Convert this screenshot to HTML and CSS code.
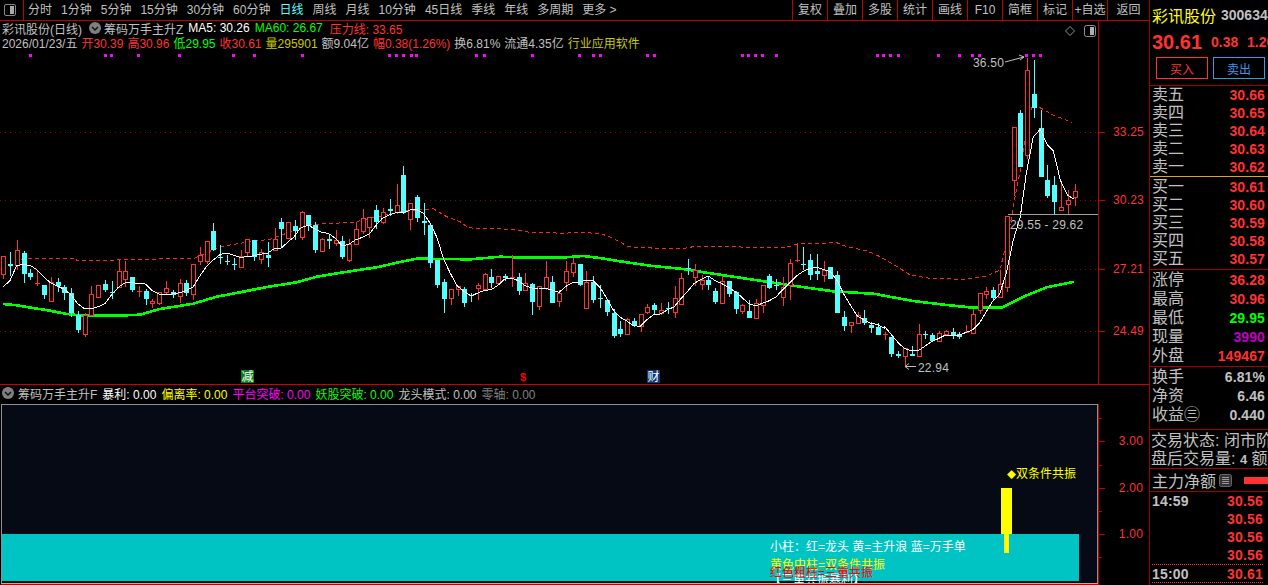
FILE: index.html
```html
<!DOCTYPE html>
<html lang="zh">
<head>
<meta charset="utf-8">
<title>彩讯股份</title>
<link rel="stylesheet" href="styles.css">
</head>
<body>
<div class="app">
  <div class="main">
    <nav class="toolbar">
      <div class="toggle"><span class="toggle-ic"><i></i></span></div>
      <div class="periods">
        <span>分时</span><span>1分钟</span><span>5分钟</span><span>15分钟</span><span>30分钟</span><span>60分钟</span><span class="on">日线</span><span>周线</span><span>月线</span><span>10分钟</span><span>45日线</span><span>季线</span><span>年线</span><span>多周期</span><span>更多 &gt;</span>
      </div>
      <div class="tools">
        <span>复权</span><span>叠加</span><span>多股</span><span>统计</span><span>画线</span><span>F10</span><span>简框</span><span>标记</span><span>+自选</span><span class="last">返回</span>
      </div>
    </nav>
    <section class="chart">
      <svg class="canvas" id="kline" viewBox="0 21 1149 363" width="1149" height="363"></svg>
      <div class="info one">
        <span class="grey">彩讯股份(日线)</span>
        <span class="round"><svg width="12" height="12" viewBox="0 0 12 12"><path d="M3 5l3 3 3-3" fill="none" stroke="#111" stroke-width="1.5"/></svg></span>
        <span class="grey">筹码万手主升Z</span>
        <span class="white">MA5: 30.26</span>
        <span class="green">MA60: 26.67</span>
        <span class="red press">压力线: 33.65</span>
      </div>
      <div class="info two">
        <span class="grey">2026/01/23/五</span>
        <span class="red">开30.39</span>
        <span class="red">高30.96</span>
        <span class="green">低29.95</span>
        <span class="red">收30.61</span>
        <span class="olive">量295901</span>
        <span class="grey">额9.04亿</span>
        <span class="red">幅0.38(1.26%)</span>
        <span class="grey">换6.81%</span>
        <span class="grey">流通4.35亿</span>
        <span class="olive">行业应用软件</span>
      </div>
    </section>
    <section class="sub">
      <div class="sub-head">
        <span class="round"><svg width="12" height="12" viewBox="0 0 12 12"><path d="M3 5l3 3 3-3" fill="none" stroke="#111" stroke-width="1.5"/></svg></span>
        <span class="grey">筹码万手主升F</span>
        <span class="white">暴利: 0.00</span>
        <span class="yellow">偏离率: 0.00</span>
        <span class="magenta">平台突破: 0.00</span>
        <span class="green">妖股突破: 0.00</span>
        <span class="grey">龙头模式: 0.00</span>
        <span class="dim">零轴: 0.00</span>
      </div>
      <div class="sub-body">
        <div class="sub-plot">
          <div class="teal"></div>
          <div class="bar-wide"></div>
          <div class="bar-mid"></div>
          <div class="tag"><span class="dia">◆</span>双条件共振</div>
          <div class="legend l1">小柱：红=龙头 黄=主升浪 蓝=万手单</div>
          <div class="legend l4">【三重共振暴利】</div>
          <div class="legend l2">黄色中柱=双条件共振</div>
          <div class="legend l3">红色粗柱=三重共振</div>
        </div>
        <div class="sub-axis">
          <svg width="50" height="180" viewBox="1099 404 50 180">
            <g stroke="#c00000" shape-rendering="crispEdges">
              <path d="M1099 441.5h6M1099 488.5h6M1099 534.5h6M1099 465.5h3M1099 511.5h3M1099 557.5h3M1099 418.5h3"/>
            </g>
            <g class="axis-t">
              <text x="1143" y="445" text-anchor="end">3.00</text>
              <text x="1143" y="492" text-anchor="end">2.00</text>
              <text x="1143" y="538" text-anchor="end">1.00</text>
            </g>
          </svg>
        </div>
      </div>
    </section>
  </div>
  <aside class="side">
    <div class="quote">
      <div class="q-name"><span class="q-title">彩讯股份</span><span class="q-code">300634</span></div>
      <div class="q-price"><b>30.61</b><span>0.38</span><span>1.26%</span></div>
      <div class="q-btns"><span class="buy">买入</span><span class="sell">卖出</span></div>
    </div>
    <div class="block ask">
      <div class="row"><span>卖五</span><b class="r">30.66</b></div>
      <div class="row"><span>卖四</span><b class="r">30.65</b></div>
      <div class="row"><span>卖三</span><b class="r">30.64</b></div>
      <div class="row"><span>卖二</span><b class="r">30.63</b></div>
      <div class="row"><span>卖一</span><b class="r">30.62</b></div>
    </div>
    <div class="block bid">
      <div class="row"><span>买一</span><b class="r">30.61</b></div>
      <div class="row"><span>买二</span><b class="r">30.60</b></div>
      <div class="row"><span>买三</span><b class="r">30.59</b></div>
      <div class="row"><span>买四</span><b class="r">30.58</b></div>
      <div class="row"><span>买五</span><b class="r">30.57</b></div>
    </div>
    <div class="block stat">
      <div class="row"><span>涨停</span><b class="r">36.28</b></div>
      <div class="row"><span>最高</span><b class="r">30.96</b></div>
      <div class="row"><span>最低</span><b class="g">29.95</b></div>
      <div class="row"><span>现量</span><b class="m">3990</b></div>
      <div class="row"><span>外盘</span><b class="r">149467</b></div>
    </div>
    <div class="block fin">
      <div class="row"><span>换手</span><b class="s">6.81%</b></div>
      <div class="row"><span>净资</span><b class="s">6.46</b></div>
      <div class="row"><span>收益㊂</span><b class="s">0.440</b></div>
    </div>
    <div class="block state">
      <div class="line">交易状态: 闭市阶段</div>
      <div class="line">盘后交易量: <b>4</b> 额</div>
    </div>
    <div class="block net">
      <span class="net-t">主力净额</span>
      <svg class="net-ic" width="13" height="13" viewBox="0 0 13 13"><rect x=".5" y=".5" width="12" height="12" rx="2" fill="#333" stroke="#666"/><path d="M3 3.5h7M3 5.5h7M3 7.5h7M3 9.5h7" stroke="#999"/></svg>
      <span class="net-bar"></span>
    </div>
    <div class="ticks">
      <div class="tick"><b class="s">14:59</b><b class="r">30.56</b></div>
      <div class="tick"><b></b><b class="r">30.56</b></div>
      <div class="tick"><b></b><b class="r">30.56</b></div>
      <div class="tick"><b></b><b class="r">30.56</b></div>
      <div class="tick last"><b class="s">15:00</b><b class="r">30.61</b></div>
    </div>
  </aside>
</div>
<script src="chart.js"></script>
</body>
</html>
```

FILE: styles.css
```css
* { box-sizing: border-box; }
html, body { margin: 0; padding: 0; background: #000; }
body {
  width: 1268px; height: 585px; overflow: hidden;
  font-family: "Liberation Sans", "Noto Sans CJK SC", sans-serif;
  font-size: 12px; color: #c0c0c0;
}
.app { display: flex; width: 1268px; height: 585px; }
.main { width: 1149px; display: flex; flex-direction: column; flex: none; }
.side { width: 119px; flex: none; border-left: 1px solid #a00000; overflow: hidden; display: flex; flex-direction: column; }

.toolbar { height: 21px; flex: none; display: flex; align-items: stretch; border-bottom: 1px solid #c00000; line-height: 21px; }
.toggle { width: 24px; flex: none; border-right: 1px solid #c00000; display: flex; align-items: center; justify-content: center; padding-right: 4px; }
.toggle-ic { width: 12px; height: 12px; border: 1px solid #888; border-radius: 2px; display: flex; justify-content: flex-end; padding: 1px; }
.toggle-ic i { width: 4px; background: #aaa; }
.periods { display: flex; gap: 9px; padding-left: 4px; flex: 1; white-space: nowrap; }
.periods .on { color: #54ffff; }
.tools { display: flex; flex: none; }
.tools span { width: 35px; text-align: center; border-left: 1px solid #c00000; white-space: nowrap; }
.tools .last { width: 42px; }

.chart { height: 364px; flex: none; position: relative; border-bottom: 1px solid #d00000; }
.canvas { position: absolute; left: 0; top: 0; display: block; }
.info { position: relative; display: flex; align-items: center; white-space: nowrap; padding-left: 2px; height: 14px; }
.info.one { gap: 5px; }
.info.one .round { margin-left: 2px; margin-right: -2px; }
.info.one .press { margin-left: 2px; }
.info.two { gap: 4px; }
.grey { color: #c0c0c0; }
.white { color: #fff; }
.green { color: #00ff00; }
.red { color: #ff3232; }
.olive { color: #c8c800; }
.yellow { color: #ffff00; }
.magenta { color: #ff00ff; }
.dim { color: #808080; }
.round { width: 12px; height: 12px; border-radius: 50%; background: #808080; display: inline-flex; flex: none; }
.round svg { display: block; }

.axis-t text, .kl-axis { font-size: 12px; fill: #ff3232; font-family: "Liberation Sans", sans-serif; letter-spacing: .2px; }
.kl-note { font-size: 12px; fill: #c0c0c0; font-family: "Liberation Sans", sans-serif; letter-spacing: .2px; }
.kl-mark { font-size: 12px; fill: #ffffff; font-family: "Noto Sans CJK SC", sans-serif; }
.kl-dollar { font-size: 11px; font-weight: bold; fill: #ff0000; font-family: "Liberation Sans", sans-serif; }

.sub { flex: 1; display: flex; flex-direction: column; }
.sub-head { height: 19px; flex: none; display: flex; align-items: center; gap: 5px; padding: 0 0 3px 2px; white-space: nowrap; }
.sub-head .round { margin-right: -1px; }
.sub-body { flex: 1; display: flex; }
.sub-plot { width: 1097px; margin-left: 1px; flex: none; position: relative; background: #050a14; border: 1px solid #909090; border-bottom-color: #b0b0b0; height: 180px; overflow: hidden; box-shadow: 0 1px 0 #c00000; }
.sub-axis { flex: 1; border-left: 1px solid #c00000; height: 181px; }
.sub-axis svg { display: block; }
.teal { position: absolute; left: 0; top: 129px; width: 1077px; height: 47px; background: #00c3c3; }
.bar-wide { position: absolute; left: 999px; top: 83px; width: 11px; height: 46px; background: #ffff00; }
.bar-mid { position: absolute; left: 1002px; top: 129px; width: 5px; height: 19px; background: #ffff00; }
.tag { position: absolute; left: 1005px; top: 62px; color: #ffff00; line-height: 14px; white-space: nowrap; }
.dia { font-size: 9px; }
.legend { position: absolute; left: 768px; line-height: 14px; white-space: nowrap; }
.l1 { top: 135px; color: #fff; }
.l2 { top: 153px; color: #ffff00; }
.l3 { top: 161px; color: #ff0000; }
.l4 { top: 168px; left: 767px; color: #fff; }

.quote { height: 86px; flex: none; border-bottom: 1px solid #a00000; padding: 0 0 0 2px; }
.q-name { height: 29px; display: flex; align-items: center; white-space: nowrap; }
.q-title { color: #ffff00; font-size: 16px; width: 69px; flex: none; }
.q-code { font-weight: bold; font-size: 14px; }
.q-price { height: 26px; display: flex; align-items: center; color: #ff3232; white-space: nowrap; font-weight: bold; font-size: 14px; overflow: hidden; }
.q-price b { font-size: 20px; width: 59px; flex: none; }
.q-price span { width: 36px; flex: none; }
.q-btns { display: flex; gap: 5px; padding-left: 4px; margin-top: 2px; }
.q-btns span { width: 52px; height: 22px; display: flex; align-items: center; justify-content: center; }
.buy { border: 1px solid #ff3232; color: #ff3232; }
.sell { border: 1px solid #3c96e6; color: #3c96e6; }

.block { flex: none; padding: 0 2px; }
.row { display: flex; justify-content: space-between; align-items: center; font-size: 16px; line-height: 18px; height: 18px; white-space: nowrap; }
.row b { font-size: 14px; letter-spacing: .1px; padding-right: 1px; }
.r { color: #ff3232; }
.g { color: #00ff00; }
.m { color: #c000c0; }
.s { color: #c0c0c0; }
.ask { height: 91px; border-bottom: 1px solid #e0a020; }
.bid { height: 93px; padding-top: 1px; border-bottom: 1px solid #a00000; }
.stat { height: 97px; border-bottom: 1px solid #a00000; }
.stat .row, .fin .row { height: 19px; }
.fin { height: 63px; border-bottom: 1px solid #a00000; }
.state { height: 39px; border-bottom: 1px solid #a00000; padding: 2px 0 0 1px; font-size: 16px; }
.state .line { height: 18px; line-height: 18px; white-space: nowrap; }
.state b { font-size: 13px; }
.net { height: 23px; display: flex; align-items: center; border-bottom: 1px solid #a00000; padding-right: 0; overflow: hidden; }
.net-t { font-size: 16px; width: 67px; flex: none; white-space: nowrap; }
.net-ic { flex: none; margin-right: 12px; }
.net-bar { width: 24px; height: 7px; background: #ff3232; flex: none; }
.ticks { flex: 1; padding: 0 5px 0 2px; }
.tick { display: flex; justify-content: space-between; height: 18px; line-height: 18px; font-size: 14px; white-space: nowrap; letter-spacing: .2px; }
.tick:nth-child(4) { border-bottom: 1px dotted #ff3232; height: 19px; }
.tick.last { border-bottom: 1px dotted #ff3232; }
```

FILE: chart.js
```js
(function () {
  var NS = 'http://www.w3.org/2000/svg';
  var svg = document.getElementById('kline');
  var RED = '#ff3232', CYAN = '#54ffff';
  function el(name, attrs, text, parent) {
    var e = document.createElementNS(NS, name);
    for (var k in attrs) e.setAttribute(k, attrs[k]);
    if (text) e.textContent = text;
    (parent || svg).appendChild(e);
    return e;
  }
  // [isRed, bodyTop, bodyBottom, wickTop, wickBottom] in page pixels
  var K = [
    [1,256,274,256,279],[0,264,266,252,276],[1,250,265,240,270],[0,253,274,251,283],[0,273,277,269,280],
    [1,283,284,271,286],[0,285,295,285,299],[1,282,301,277,301],[0,282,286,278,292],[0,287,293,285,300],
    [0,293,313,288,317],[0,315,330,311,333],[1,315,334,313,337],[1,294,315,286,315],[1,285,297,285,297],
    [0,284,290,280,292],[0,292,293,281,299],[1,271,287,260,288],[1,271,279,261,287],[0,277,290,277,292],
    [1,291,291,286,297],[0,291,299,289,305],[1,301,303,299,308],[1,292,303,292,305],[1,288,292,281,295],
    [0,292,295,290,298],[1,283,296,279,303],[0,283,293,280,296],[1,264,294,264,300],[1,255,261,247,265],
    [1,241,261,241,264],[0,231,250,223,251],[0,257,258,245,264],[0,261,262,255,265],[0,264,265,258,270],
    [1,256,267,250,267],[1,239,252,239,257],[0,240,257,240,261],[1,252,259,249,264],[0,255,258,242,267],
    [1,239,250,228,251],[0,222,229,218,248],[1,222,238,222,239],[0,226,231,220,240],[1,212,237,211,240],
    [0,215,226,215,231],[0,225,250,222,253],[1,239,251,238,252],[0,239,241,234,249],[1,240,243,230,246],
    [0,241,257,236,259],[1,244,260,239,262],[1,229,244,222,244],[1,218,231,209,234],[1,217,227,217,238],
    [0,210,222,205,229],[1,212,222,208,224],[0,209,211,199,216],[1,205,212,184,214],[0,175,213,166,214],
    [1,203,219,203,230],[0,197,218,195,222],[0,221,223,203,235],[0,225,263,225,268],[0,260,285,260,288],
    [0,282,299,279,313],[1,289,298,289,305],[1,286,289,286,296],[0,289,303,287,307],[0,295,296,293,302],
    [1,285,288,283,300],[1,274,289,273,290],[0,277,283,269,288],[1,276,283,276,284],[0,276,278,274,281],
    [1,277,278,255,287],[0,277,291,273,295],[1,283,290,273,290],[0,284,302,283,315],[1,286,306,286,310],
    [1,277,288,261,290],[0,282,303,276,303],[1,293,301,290,307],[1,271,282,261,291],[1,263,272,258,277],
    [0,264,285,264,286],[1,282,308,271,309],[0,282,300,276,303],[0,298,299,285,308],[0,300,312,300,316],
    [0,313,336,309,338],[0,329,334,321,337],[1,319,334,318,335],[0,321,326,318,327],[1,314,326,314,332],
    [1,307,312,304,314],[0,305,310,303,315],[1,310,313,303,315],[0,308,309,302,314],[1,298,312,286,318],
    [1,278,304,273,305],[0,268,269,259,275],[1,270,277,264,286],[1,280,284,275,290],[0,280,285,276,290],
    [0,291,302,288,304],[1,281,303,276,303],[0,281,294,281,297],[0,292,309,291,314],[1,305,311,304,314],
    [0,311,318,300,318],[1,303,318,299,318],[1,285,305,285,313],[0,276,288,274,289],[0,285,286,279,290],
    [1,287,297,277,306],[1,263,285,259,300],[1,260,261,244,262],[0,264,265,247,270],[0,260,275,254,280],
    [0,271,274,254,280],[1,270,275,261,282],[0,267,279,267,279],[0,275,313,271,313],[0,317,326,311,331],
    [1,322,325,322,333],[1,315,323,312,323],[0,318,323,310,325],[0,325,328,322,333],[0,327,335,323,335],
    [1,334,335,332,340],[0,337,354,337,357],[0,354,356,351,358],[1,348,356,348,366],[0,354,356,346,356],
    [1,334,356,324,356],[0,334,335,331,339],[0,335,341,333,342],[1,333,341,331,341],[1,331,334,330,335],
    [0,332,336,328,339],[0,334,337,332,339],[1,332,333,325,333],[1,314,333,309,333],[1,293,310,293,314],
    [1,291,294,287,299],[0,290,298,287,301],[1,284,297,270,297],[1,216,287,216,292],[1,127,180,127,196],
    [0,113,167,110,167],[1,70,155,58,159],[0,94,108,60,118],[0,128,177,110,177],[0,180,196,165,198],
    [0,185,202,176,214],[1,207,210,182,210],[1,200,204,190,214],[1,191,197,184,206]
  ];
  function pts(list, ox, oy) {
    return list.map(function (p) { return [ox + p[0] / 3, oy + p[1] / 3]; });
  }
  var ma5 = [].concat(
    pts([[10,380],[30,362],[50,316],[70,314],[91,316],[112,330],[133,352],[151,368],[172,378],[193,388],[214,405],[232,430],[253,446],[274,447],[295,440],[316,430],[334,405],[355,382],[376,368],[397,368],[436,372],[457,392],[478,402],[499,404],[517,402],[538,398],[559,392],[580,380],[598,350],[619,320],[640,300],[661,283],[682,280],[700,285],[721,292],[742,290],[763,287],[781,283],[802,280],[823,266],[844,264],[865,245],[883,230]],0,160),
    pts([[0,205],[25,195],[46,208],[64,217],[85,220],[106,235],[127,258],[148,252],[166,240],[187,232],[208,222],[229,195],[247,175],[268,165],[289,158],[310,158],[331,150],[349,148],[370,160],[391,190],[412,235],[430,295],[451,340],[472,378],[493,395],[514,407],[532,400],[553,391],[574,389],[595,375],[613,358],[634,354],[655,362],[676,377],[697,384],[715,384],[736,385],[757,390],[778,397],[796,380],[817,368],[838,367],[859,360],[880,362]],300,160),
    pts([[0,172],[20,205],[40,240],[61,262],[79,272],[100,287],[121,289],[142,268],[163,253],[181,252],[202,240],[223,230],[244,205],[262,185],[283,160],[304,148],[325,138],[346,152],[364,160],[385,172],[406,185],[427,203],[445,220],[466,228],[487,220],[508,212],[529,200],[547,180],[568,160],[589,138],[610,124],[628,116],[649,112],[670,118],[691,125],[712,152],[730,190],[751,225],[772,258],[793,270],[811,280],[832,283],[853,295]],600,230),
    pts([[14,860],[35,885],[56,910],[73,925],[94,932],[115,932],[136,918],[154,905],[175,896],[196,885],[217,885],[238,885],[256,878],[277,870],[298,850],[319,815],[337,785],[358,765],[379,700],[400,600],[421,530],[439,400],[460,290],[481,268],[502,315],[520,332],[541,420],[562,465],[583,478]],880,40)
  );
  var ma60 = [].concat(
    pts([[10,432],[50,436],[100,444],[150,452],[200,462],[253,467],[350,467],[420,464],[480,447],[580,431],[650,410],[720,397],[800,381],[890,367]],0,160),
    pts([[50,350],[130,337],[230,322],[300,306],[350,296],[470,297],[500,299],[600,290],[680,293],[780,293],[850,288]],300,160),
    pts([[0,84],[60,94],[150,107],[250,117],[300,125],[400,140],[500,155],[600,170],[700,184],[830,192]],600,230),
    pts([[0,765],[100,783],[200,795],[280,803],[365,803],[430,770],[500,742],[583,725]],880,40)
  );
  var press = [].concat(
    pts([[27,320],[50,305],[70,295],[225,295],[232,303],[350,300],[370,298],[580,296],[660,260],[750,245],[810,238]],0,160),
    pts([[0,205],[40,193],[160,187],[210,175],[320,152],[400,146],[440,170],[480,185],[500,200],[520,205],[640,208],[690,217],[800,220],[810,217]],300,160),
    pts([[0,10],[40,25],[85,50],[170,55],[240,57],[280,50],[560,52],[590,42],[710,38],[740,50],[800,62]],600,230),
    pts([[0,650],[60,685],[90,705],[150,715],[250,718],[320,708],[360,690],[372,640],[395,530],[405,470],[425,370],[445,230],[460,192],[520,225],[575,247]],880,40)
  );
  function poly(list, attrs) {
    attrs.points = list.map(function (p) { return p[0].toFixed(1) + ',' + p[1].toFixed(1); }).join(' ');
    attrs.fill = 'none';
    el('polyline', attrs);
  }

  // price grid
  [132, 200, 269, 331].forEach(function (y) {
    el('line', { x1: 0, x2: 1098, y1: y + .5, y2: y + .5, stroke: '#900000', 'stroke-dasharray': '1 4', 'shape-rendering': 'crispEdges' });
  });
  // axis
  el('line', { x1: 1098.5, x2: 1098.5, y1: 21, y2: 384, stroke: '#c00000', 'shape-rendering': 'crispEdges' });
  [[132,'33.25'],[200,'30.23'],[269,'27.21'],[331,'24.49']].forEach(function (a) {
    el('line', { x1: 1099, x2: 1105, y1: a[0] + .5, y2: a[0] + .5, stroke: '#c00000', 'shape-rendering': 'crispEdges' });
    el('text', { x: 1144, y: a[0] + 4, 'text-anchor': 'end', 'class': 'kl-axis' }, a[1]);
  });
  // signal dots
  [29,104,110,137,178,232,253,301,388,395,402,410,415,475,483,531,578,592,599,646,653,741,747,754,761,775,876,882,889,897,937,958,971,978,1025,1032,1039].forEach(function (x) {
    el('rect', { x: x, y: 54, width: 3, height: 3, fill: '#ff00ff' });
  });

  poly(press, { stroke: '#ff2020', 'stroke-width': 1, 'stroke-dasharray': '4 3', 'shape-rendering': 'crispEdges' });
  poly(ma60, { stroke: '#00ff00', 'stroke-width': 2.6, 'shape-rendering': 'crispEdges' });

  // candles
  K.forEach(function (c, i) {
    var x = Math.round(3.3 + i * 6.78);
    var col = c[0] ? RED : CYAN;
    el('line', { x1: x + .5, x2: x + .5, y1: c[3], y2: c[4], stroke: col, 'shape-rendering': 'crispEdges' });
    var h = c[2] - c[1];
    if (c[0] && h > 1) {
      el('rect', { x: x - 1.5, y: c[1] + .5, width: 4, height: h, fill: '#000', stroke: col, 'shape-rendering': 'crispEdges' });
    } else {
      el('rect', { x: x - 2, y: c[1], width: 5, height: Math.max(h, 1), fill: col, 'shape-rendering': 'crispEdges' });
    }
  });

  poly(ma5, { stroke: '#ffffff', 'stroke-width': 1, 'shape-rendering': 'crispEdges' });

  // annotations
  el('text', { x: 973, y: 67, 'class': 'kl-note' }, '36.50');
  el('path', { d: 'M1005 62L1024 57M1019 55l5 2-4 3', fill: 'none', stroke: '#c0c0c0' });
  el('text', { x: 918, y: 372, 'class': 'kl-note' }, '22.94');
  el('path', { d: 'M916 366.5H905M909 363.5l-4 3 4 3', fill: 'none', stroke: '#c0c0c0' });
  el('line', { x1: 1008, x2: 1098, y1: 214.5, y2: 214.5, stroke: '#a0a0a0', 'shape-rendering': 'crispEdges' });
  el('text', { x: 1010, y: 229, 'class': 'kl-note' }, '29.55 - 29.62');

  // markers
  el('rect', { x: 241, y: 370, width: 13, height: 13, fill: '#0a7a14' });
  el('text', { x: 241.5, y: 381, 'class': 'kl-mark' }, '减');
  el('text', { x: 520, y: 381, 'class': 'kl-dollar' }, '$');
  el('rect', { x: 647, y: 370, width: 13, height: 13, fill: '#0a3a78' });
  el('text', { x: 647.5, y: 381, 'class': 'kl-mark' }, '财');

  // corner icons
  el('path', { d: 'M1070 26.5l4.5 4.5-4.5 4.5-4.5-4.5z', fill: 'none', stroke: '#909090' });
  el('rect', { x: 1084.5, y: 25.5, width: 11, height: 11, rx: 2, fill: 'none', stroke: '#909090' });
  el('rect', { x: 1090, y: 27, width: 4, height: 8, fill: '#b0b0b0' });
})();
```
